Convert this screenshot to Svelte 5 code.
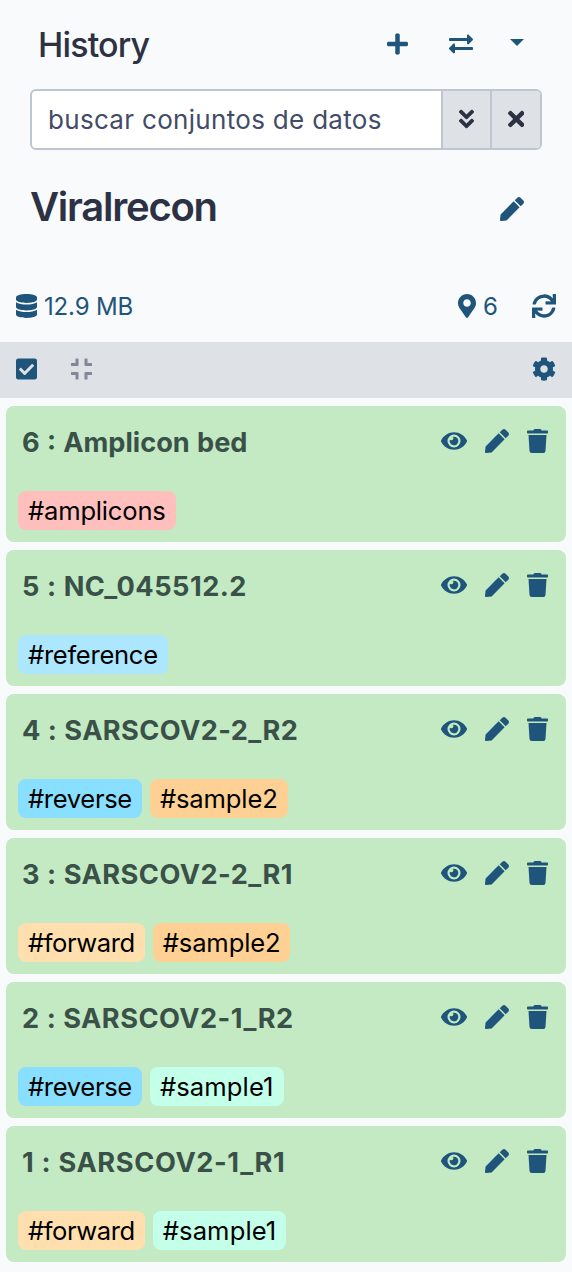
<script>
  const icons = {
    plus: [448, 'M416 208H272V64c0-17.67-14.33-32-32-32h-32c-17.67 0-32 14.33-32 32v144H32c-17.67 0-32 14.33-32 32v32c0 17.67 14.33 32 32 32h144v144c0 17.67 14.33 32 32 32h32c17.67 0 32-14.33 32-32V304h144c17.67 0 32-14.33 32-32v-32c0-17.67-14.33-32-32-32z'],
    exchange: [512, 'M0 168v-16c0-13.255 10.745-24 24-24h360V80c0-21.367 25.899-32.042 40.971-16.971l80 80c9.372 9.373 9.372 24.569 0 33.941l-80 80C409.956 271.982 384 261.456 384 240v-48H24c-13.255 0-24-10.745-24-24zm488 152H128v-48c0-21.314-25.862-32.08-40.971-16.971l-80 80c-9.372 9.373-9.372 24.569 0 33.941l80 80C102.057 463.997 128 453.437 128 432v-48h360c13.255 0 24-10.745 24-24v-16c0-13.255-10.745-24-24-24z'],
    down: [320, 'M143 256.3L7 120.3c-9.4-9.4-9.4-24.6 0-33.9l22.6-22.6c9.4-9.4 24.6-9.4 33.9 0l96.4 96.4 96.4-96.4c9.4-9.4 24.6-9.4 33.9 0L313 86.3c9.4 9.4 9.4 24.6 0 33.9l-136 136c-9.4 9.5-24.6 9.5-34 .1zm34 192l136-136c9.4-9.4 9.4-24.6 0-33.9l-22.6-22.6c-9.4-9.4-24.6-9.4-33.9 0L160 352.1l-96.4-96.4c-9.4-9.4-24.6-9.4-33.9 0L7 278.3c-9.4 9.4-9.4 24.6 0 33.9l136 136c9.4 9.5 24.6 9.5 34 .1z'],
    times: [352, 'M242.72 256l100.07-100.07c12.28-12.28 12.28-32.19 0-44.48l-22.24-22.24c-12.28-12.28-32.19-12.28-44.48 0L176 189.28 75.93 89.21c-12.28-12.28-32.19-12.28-44.48 0L9.21 111.45c-12.28 12.28-12.28 32.19 0 44.48L109.28 256 9.21 356.07c-12.28 12.28-12.28 32.19 0 44.48l22.24 22.24c12.28 12.28 32.2 12.28 44.48 0L176 322.72l100.07 100.07c12.28 12.28 32.2 12.28 44.48 0l22.24-22.24c12.28-12.28 12.28-32.19 0-44.48L242.72 256z'],
    pen: [512, 'M290.74 93.24l128.02 128.02-277.99 277.99-114.14 12.6C11.35 513.54-1.56 500.62.14 485.34l12.7-114.22 277.9-277.88zm207.2-19.06l-60.11-60.11c-18.75-18.75-49.16-18.75-67.91 0l-56.55 56.55 128.02 128.02 56.55-56.55c18.75-18.76 18.75-49.16 0-67.91z'],
    database: [448, 'M448 73.143v45.714C448 159.143 347.667 192 224 192S0 159.143 0 118.857V73.143C0 32.857 100.333 0 224 0s224 32.857 224 73.143zM448 176v102.857C448 319.143 347.667 352 224 352S0 319.143 0 278.857V176c48.125 33.143 136.208 48.572 224 48.572S399.874 209.143 448 176zm0 160v102.857C448 479.143 347.667 512 224 512S0 479.143 0 438.857V336c48.125 33.143 136.208 48.572 224 48.572S399.874 369.143 448 336z'],
    marker: [384, 'M172.268 501.67C26.97 291.031 0 269.413 0 192 0 85.961 85.961 0 192 0s192 85.961 192 192c0 77.413-26.97 99.031-172.268 309.67-9.535 13.774-29.93 13.773-39.464 0zM192 272c44.183 0 80-35.817 80-80s-35.817-80-80-80-80 35.817-80 80 35.817 80 80 80z'],
    sync: [512, 'M440.65 12.57l4 82.77A247.16 247.16 0 0 0 255.83 8C134.73 8 33.91 94.92 12.29 209.82A12 12 0 0 0 24.09 224h49.05a12 12 0 0 0 11.67-9.26 175.91 175.91 0 0 1 317-56.94l-101.46-4.86a12 12 0 0 0-12.57 12v47.41a12 12 0 0 0 12 12H500a12 12 0 0 0 12-12V12a12 12 0 0 0-12-12h-47.37a12 12 0 0 0-11.98 12.57zM255.83 432a175.61 175.61 0 0 1-146-77.8l101.8 4.87a12 12 0 0 0 12.57-12v-47.4a12 12 0 0 0-12-12H12a12 12 0 0 0-12 12V500a12 12 0 0 0 12 12h47.35a12 12 0 0 0 12-12.6l-4.15-82.57A247.17 247.17 0 0 0 255.83 504c121.11 0 221.93-86.92 243.55-201.82a12 12 0 0 0-11.8-14.18h-49.05a12 12 0 0 0-11.67 9.26A175.86 175.86 0 0 1 255.83 432z'],
    check: [448, 'M400 480H48c-26.51 0-48-21.49-48-48V80c0-26.51 21.49-48 48-48h352c26.51 0 48 21.49 48 48v352c0 26.51-21.49 48-48 48zm-204.686-98.059l184-184c6.248-6.248 6.248-16.379 0-22.627l-22.627-22.627c-6.248-6.248-16.379-6.249-22.628 0L184 302.745l-70.059-70.059c-6.248-6.248-16.379-6.248-22.628 0l-22.627 22.627c-6.248 6.248-6.248 16.379 0 22.627l104 104c6.249 6.25 16.379 6.25 22.628.001z'],
    compress: [448, 'M436 192H312c-13.3 0-24-10.7-24-24V44c0-6.6 5.4-12 12-12h40c6.6 0 12 5.4 12 12v84h84c6.6 0 12 5.4 12 12v40c0 6.6-5.4 12-12 12zm-276-24V44c0-6.6-5.4-12-12-12h-40c-6.6 0-12 5.4-12 12v84H12c-6.6 0-12 5.4-12 12v40c0 6.6 5.4 12 12 12h124c13.3 0 24-10.7 24-24zm0 300V344c0-13.3-10.7-24-24-24H12c-6.6 0-12 5.4-12 12v40c0 6.6 5.4 12 12 12h84v84c0 6.6 5.4 12 12 12h40c6.6 0 12-5.4 12-12zm192 0v-84h84c6.6 0 12-5.4 12-12v-40c0-6.6-5.4-12-12-12H312c-13.3 0-24 10.7-24 24v124c0 6.6 5.4 12 12 12h40c6.6 0 12-5.4 12-12z'],
    cog: [512, 'M487.4 315.7l-42.6-24.6c4.3-23.2 4.3-47 0-70.2l42.6-24.6c4.9-2.8 7.1-8.6 5.5-14-11.1-35.6-30-67.8-54.7-94.6-3.8-4.1-10-5.1-14.8-2.3L380.8 110c-17.9-15.4-38.5-27.3-60.8-35.1V25.8c0-5.6-3.9-10.5-9.4-11.7-36.7-8.2-74.3-7.8-109.2 0-5.5 1.2-9.4 6.1-9.4 11.7V75c-22.2 7.9-42.8 19.8-60.8 35.1L88.7 85.5c-4.9-2.8-11-1.9-14.8 2.3-24.7 26.7-43.6 58.9-54.7 94.6-1.7 5.4.6 11.2 5.5 14L67.3 221c-4.3 23.2-4.3 47 0 70.2l-42.6 24.6c-4.9 2.8-7.1 8.6-5.5 14 11.1 35.6 30 67.8 54.7 94.6 3.8 4.1 10 5.1 14.8 2.3l42.6-24.6c17.9 15.4 38.5 27.3 60.8 35.1v49.2c0 5.6 3.9 10.5 9.4 11.7 36.7 8.2 74.3 7.8 109.2 0 5.5-1.2 9.4-6.1 9.4-11.7v-49.2c22.2-7.9 42.8-19.8 60.8-35.1l42.6 24.6c4.9 2.8 11 1.9 14.8-2.3 24.7-26.7 43.6-58.9 54.7-94.6 1.5-5.5-.7-11.3-5.6-14.1zM256 336c-44.1 0-80-35.9-80-80s35.9-80 80-80 80 35.9 80 80-35.9 80-80 80z'],
    eye: [576, 'M572.52 241.4C518.29 135.59 410.93 64 288 64S57.68 135.64 3.48 241.41a32.35 32.35 0 0 0 0 29.19C57.71 376.41 165.07 448 288 448s230.32-71.64 284.52-177.41a32.35 32.35 0 0 0 0-29.19zM288 400a144 144 0 1 1 144-144 143.93 143.93 0 0 1-144 144zm0-240a95.31 95.31 0 0 0-25.31 3.79 47.85 47.85 0 0 1-66.9 66.9A95.78 95.78 0 1 0 288 160z'],
    trash: [448, 'M432 32H312l-9.4-18.7A24 24 0 0 0 281.1 0H166.8a23.72 23.72 0 0 0-21.4 13.3L136 32H16A16 16 0 0 0 0 48v32a16 16 0 0 0 16 16h416a16 16 0 0 0 16-16V48a16 16 0 0 0-16-16zM53.2 467a48 48 0 0 0 47.9 45h245.8a48 48 0 0 0 47.9-45L416 128H32z'],
  };

  const items = [
    { hid: 6, name: 'Amplicon bed', tracking: 0, tags: ['amplicons'] },
    { hid: 5, name: 'NC_045512.2', tracking: 0.48, tags: ['reference'] },
    { hid: 4, name: 'SARSCOV2-2_R2', tracking: 0.4, tags: ['reverse', 'sample2'] },
    { hid: 3, name: 'SARSCOV2-2_R1', tracking: 0.45, tags: ['forward', 'sample2'] },
    { hid: 2, name: 'SARSCOV2-1_R2', tracking: 0.45, tags: ['reverse', 'sample1'] },
    { hid: 1, name: 'SARSCOV2-1_R1', tracking: 0.6, tags: ['forward', 'sample1'] },
  ];
</script>

{#snippet icon(name)}
  <svg class="icon {name}" width={(icons[name][0] * 24) / 512} height="24" viewBox="0 0 {icons[name][0]} 512" aria-hidden="true">
    <path d={icons[name][1]} />
  </svg>
{/snippet}

<div class="panel">
  <header class="top">
    <h2>History</h2>
    <div class="top-actions">
      {@render icon('plus')}
      {@render icon('exchange')}
      <svg class="icon caret" width="14" height="7" viewBox="0 0 14 7" aria-hidden="true"><path d="M0 0H14L7 7Z" /></svg>
    </div>
  </header>

  <div class="search">
    <div class="field">buscar conjuntos de datos</div>
    <div class="btn">{@render icon('down')}</div>
    <div class="btn last">{@render icon('times')}</div>
  </div>

  <div class="name">
    <h1>Viralrecon</h1>
    {@render icon('pen')}
  </div>

  <div class="stats">
    <span class="stat size">{@render icon('database')}<span>12.9 MB</span></span>
    <span class="stat count">{@render icon('marker')}<span>6</span></span>
    {@render icon('sync')}
  </div>

  <div class="toolbar">
    {@render icon('check')}
    <span class="muted">{@render icon('compress')}</span>
    {@render icon('cog')}
  </div>

  <div class="list">
    {#each items as item}
      <article class="card">
        <div class="row">
          <h3 style:letter-spacing="{item.tracking}px">{item.hid} : {item.name}</h3>
          <div class="actions">
            {@render icon('eye')}
            {@render icon('pen')}
            {@render icon('trash')}
          </div>
        </div>
        <div class="tags">
          {#each item.tags as tag}
            <span class="tag {tag}">#{tag}</span>
          {/each}
        </div>
      </article>
    {/each}
  </div>
</div>

<style>
  :global(body) {
    background: #f8fafc;
  }
  .panel {
    width: 572px;
    height: 1272px;
    overflow: hidden;
    box-sizing: border-box;
    background: #f8fafc;
    color: #2c3143;
    font-family: Inter, sans-serif;
    font-size: 25.6px;
  }
  h1, h2, h3 {
    margin: 0;
  }
  .icon {
    display: block;
    flex: none;
    fill: #1f557b;
  }
  .top {
    display: flex;
    align-items: center;
    justify-content: space-between;
    height: 89px;
    padding: 0 48px 0 38px;
    box-sizing: border-box;
  }
  h2 {
    font-size: 34px;
    font-weight: 530;
    line-height: 40px;
    letter-spacing: -0.85px;
  }
  .top-actions {
    display: flex;
    align-items: center;
    padding-bottom: 1px;
  }
  .top-actions .icon + .icon {
    margin-left: 41px;
  }
  .top-actions .caret.icon {
    margin: 0 0 3px 37px;
  }
  .search {
    display: flex;
    height: 61px;
    margin: 0 30px;
    box-sizing: border-box;
    border: 2px solid #bdc6d1;
    border-radius: 6px;
    background: #fff;
    overflow: hidden;
  }
  .field {
    flex: 1;
    padding-left: 16px;
    font-size: 26px;
    letter-spacing: 0.31px;
    line-height: 57px;
    color: #434c66;
  }
  .btn {
    display: flex;
    align-items: center;
    justify-content: center;
    width: 47px;
    padding-bottom: 2px;
    border-left: 2px solid #bdc6d1;
    background: #dee1e6;
  }
  .btn.last {
    width: 48px;
  }
  .btn .icon {
    fill: #2c3143;
  }
  .name {
    display: flex;
    align-items: center;
    justify-content: space-between;
    height: 118px;
    padding: 0 48px 0 30px;
  }
  h1 {
    font-size: 40px;
    font-weight: 570;
    line-height: 48px;
    letter-spacing: -1.25px;
    margin-bottom: 4px;
  }
  .stats {
    display: flex;
    align-items: center;
    height: 74px;
    padding: 1px 16px 0;
    box-sizing: border-box;
    font-size: 24px;
    color: #1f557b;
  }
  .stat {
    display: flex;
    align-items: center;
    gap: 7px;
    line-height: 32px;
  }
  .stat span {
    padding-top: 3px;
  }
  .size {
    margin-right: auto;
    letter-spacing: -0.15px;
  }
  .count {
    margin-right: 34px;
  }
  .toolbar {
    display: flex;
    align-items: center;
    height: 56px;
    padding: 0 16px 2px;
    background: #dee1e6;
    box-sizing: border-box;
  }
  .muted {
    margin: 0 auto 0 34px;
  }
  .muted .icon {
    fill: #808797;
  }
  .list {
    display: flex;
    flex-direction: column;
    gap: 8px;
    padding: 8px 6px;
  }
  .card {
    height: 136px;
    box-sizing: border-box;
    border-radius: 8px;
    background: #c4eac3;
    padding: 20px 18px 12px 12px;
    display: flex;
    flex-direction: column;
    justify-content: space-between;
  }
  .row {
    display: flex;
    justify-content: space-between;
    align-items: flex-start;
  }
  h3 {
    padding: 1px 0 0 4px;
    font-size: 27.2px;
    font-weight: 700;
    line-height: 32px;
    word-spacing: 0.2px;
    color: #395148;
  }
  .card:first-child h3 {
    word-spacing: 0.8px;
  }
  .actions {
    display: flex;
    gap: 18px;
    padding-top: 3px;
  }
  .actions .eye {
    width: 26px;
  }
  .tags {
    display: flex;
    gap: 8px;
  }
  .tag {
    height: 39px;
    padding: 0 10px;
    border-radius: 8px;
    line-height: 39px;
    color: #000;
  }
  .amplicons { background: #ffbfbd; letter-spacing: -0.2px; }
  .reference { background: #ace7ff; letter-spacing: -0.3px; }
  .reverse { background: #88dfff; letter-spacing: -0.35px; }
  .forward { background: #ffdfad; letter-spacing: -0.45px; }
  .sample2 { background: #ffd093; letter-spacing: -0.15px; }
  .sample1 { background: #c3ffe9; letter-spacing: 0.1px; }
</style>
